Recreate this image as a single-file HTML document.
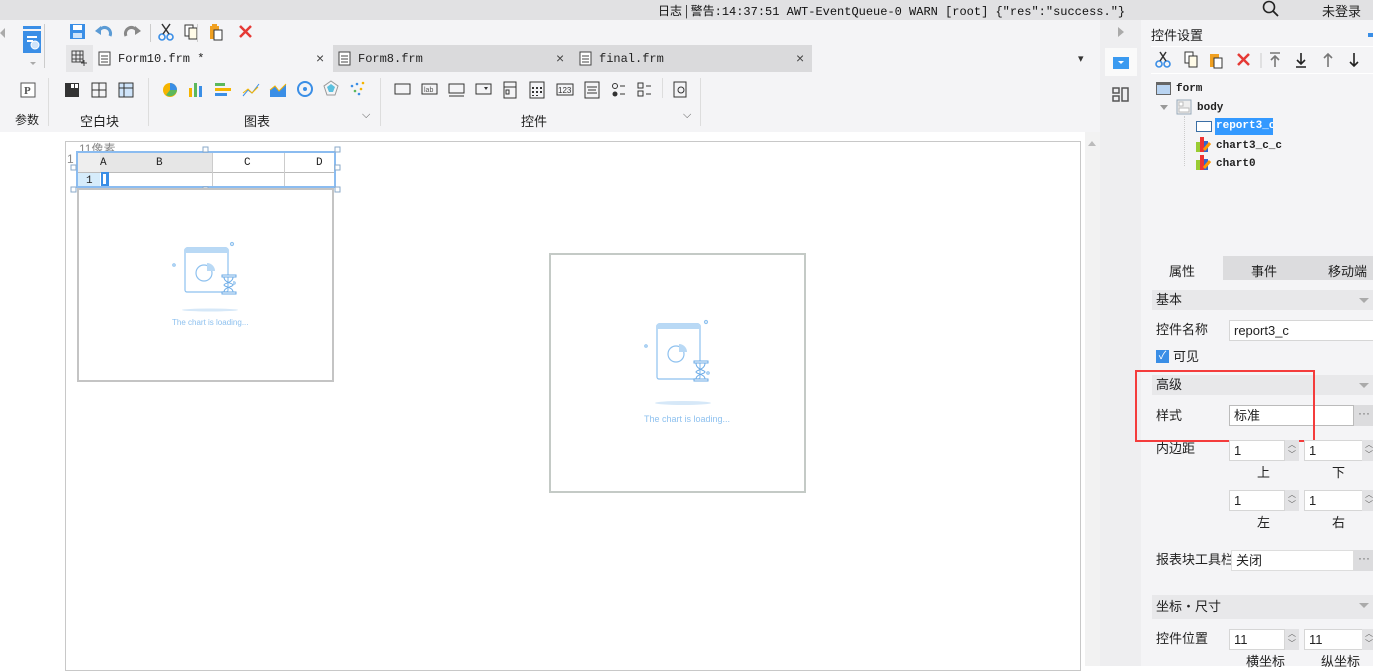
<!DOCTYPE html>
<html><head><meta charset="utf-8"><style>
*{margin:0;padding:0;box-sizing:border-box}
body{width:1373px;height:666px;overflow:hidden;position:relative;background:#fff;font-family:"Liberation Sans","Noto Sans CJK SC",sans-serif;font-size:12px;color:#222}
.a{position:absolute}
.mono{font-family:"Liberation Mono","Noto Sans CJK SC",monospace}
.sec{position:absolute;left:1152px;width:221px;height:20px;background:#e8e8ea;padding-left:4px;line-height:20px;font-size:13px}
.sec:after{content:"";position:absolute;right:4px;top:8px;border:5px solid transparent;border-top:5px solid #aaa}
.inp{position:absolute;background:#fff;border:1px solid #d6d6d6;height:21px;line-height:19px;padding-left:4px;font-size:13px}
.spin{position:absolute;width:14px;height:21px;background:#e2e2e4;font-size:8px;color:#666;text-align:center;line-height:10px}
.lbl{position:absolute;font-size:13px;line-height:16px}
.dots{position:absolute;width:20px;height:21px;background:#dcdcde;color:#666;text-align:center;line-height:16px;font-size:12px}
</style></head><body>
<div class="a" style="left:0;top:0;width:1373px;height:20px;background:#e1e1e3"></div>
<div class="a mono" style="left:658px;top:2px;font-size:12px;color:#111"><span style="font-family:'Noto Sans CJK SC'">日志 | 警告</span>:14:37:51 AWT-EventQueue-0 WARN [root] {"res":"success."}</div>
<svg class="a" style="left:1262px;top:0" width="18" height="18"><circle cx="7" cy="7" r="5.5" fill="none" stroke="#222" stroke-width="1.6"/><path d="M11 11l5 5" stroke="#222" stroke-width="1.8"/></svg>
<div class="a" style="left:1322px;top:1px;font-size:13px">未登录</div>
<div class="a" style="left:0;top:20px;width:1100px;height:112px;background:#f4f4f6"></div>
<div class="a" style="left:0;top:28px;border:5px solid transparent;border-right:5px solid #aaa;border-left:0"></div>
<svg class="a" style="left:22px;top:25px" width="22" height="32"><rect x="1" y="1" width="18" height="3" fill="#3a8ee6"/><rect x="1" y="6" width="18" height="22" fill="#3a8ee6"/><rect x="5" y="11" width="10" height="2" fill="#fff"/><rect x="5" y="15" width="6" height="2" fill="#fff"/><circle cx="13" cy="20" r="4" fill="#cfe4fa" stroke="#fff"/></svg>
<div class="a" style="left:30px;top:62px;border:3px solid transparent;border-top:3px solid #aaa"></div>
<div class="a" style="left:44px;top:24px;width:1px;height:44px;background:#ccc"></div>
<svg class="a" style="left:69px;top:23px" width="190" height="18">
<rect x="1" y="1" width="15" height="15" fill="#3a8ee6"/><rect x="4" y="2" width="9" height="5" fill="#fff"/><rect x="4" y="10" width="9" height="5" fill="#cfe4fa"/>
<path d="M30 8a6 6 0 0 1 11 5" stroke="#5b9bd5" stroke-width="3" fill="none"/><path d="M26 8l6-5v9z" fill="#5b9bd5"/>
<path d="M68 8a6 6 0 0 0 -11 5" stroke="#888" stroke-width="3" fill="none"/><path d="M72 8l-6-5v9z" fill="#888"/>
<circle cx="93" cy="14" r="3" fill="none" stroke="#3a8ee6" stroke-width="1.6"/><circle cx="101" cy="14" r="3" fill="none" stroke="#3a8ee6" stroke-width="1.6"/><path d="M94 11l7-10M100 11l-7-10" stroke="#333" stroke-width="1.5"/>
<rect x="116" y="2" width="8" height="11" fill="#fff" stroke="#333"/><rect x="120" y="5" width="8" height="11" fill="#fffbe8" stroke="#333"/>
<rect x="141" y="3" width="9" height="13" fill="#f0a020"/><rect x="145" y="7" width="8" height="10" fill="#fff" stroke="#333"/><rect x="143" y="1" width="5" height="3" fill="#f0a020"/>
<path d="M171 3l11 11M182 3l-11 11" stroke="#e53935" stroke-width="2.5"/></svg>
<div class="a" style="left:150px;top:24px;width:1px;height:18px;background:#ccc"></div>
<div class="a" style="left:197px;top:24px;width:1px;height:18px;background:#ccc"></div>
<div class="a" style="left:66px;top:45px;width:746px;height:27px;background:#dadadc"></div>
<div class="a" style="left:66px;top:45px;width:27px;height:27px;background:#e6e6e8"></div>
<svg class="a" style="left:71px;top:50px" width="16" height="16"><path d="M1 1h11v11H1zM1 5h11M1 9h11M5 1v11M9 1v11" stroke="#444" fill="none"/><path d="M13 10v6M10 13h6" stroke="#444"/></svg>
<div class="a" style="left:93px;top:45px;width:240px;height:27px;background:#f4f4f6"></div>
<svg class="a" style="left:98px;top:51px" width="14" height="15"><rect x="1" y="1" width="11" height="13" fill="#fff" stroke="#444"/><path d="M3 5h7M3 8h7M3 11h7" stroke="#444"/></svg>
<div class="a mono" style="left:118px;top:52px;font-size:12px">Form10.frm *</div>
<div class="a" style="left:316px;top:50px;font-size:14px;color:#444">×</div>
<svg class="a" style="left:338px;top:51px" width="14" height="15"><rect x="1" y="1" width="11" height="13" fill="#fff" stroke="#444"/><path d="M3 5h7M3 8h7M3 11h7" stroke="#444"/></svg>
<div class="a mono" style="left:358px;top:52px">Form8.frm</div>
<div class="a" style="left:556px;top:50px;font-size:14px;color:#444">×</div>
<svg class="a" style="left:579px;top:51px" width="14" height="15"><rect x="1" y="1" width="11" height="13" fill="#fff" stroke="#444"/><path d="M3 5h7M3 8h7M3 11h7" stroke="#444"/></svg>
<div class="a mono" style="left:599px;top:52px">final.frm</div>
<div class="a" style="left:796px;top:50px;font-size:14px;color:#444">×</div>
<div class="a" style="left:1078px;top:52px;font-size:11px;color:#333">▾</div>
<svg class="a" style="left:0;top:78px" width="700" height="26">
<rect x="21" y="5" width="14" height="14" fill="#fff" stroke="#555"/><text x="24" y="16" font-size="11" font-family="Liberation Serif" font-weight="bold" fill="#555">P</text>
<rect x="65" y="5" width="14" height="14" fill="#333"/><rect x="71" y="6" width="3" height="4" fill="#fff"/><rect x="75" y="6" width="3" height="4" fill="#fff"/>
<rect x="92" y="5" width="14" height="14" fill="none" stroke="#333"/><path d="M99 5v14M92 12h14" stroke="#333"/>
<rect x="119" y="5" width="14" height="14" fill="#cfe4fa" stroke="#333"/><path d="M124 5v14M119 10h14" stroke="#333"/>
<circle cx="170" cy="12" r="7" fill="#f5b400"/><path d="M170 12V5a7 7 0 0 1 7 7z" fill="#3a8ee6"/><path d="M170 12h7a7 7 0 0 1-11 5z" fill="#5cb85c"/>
<rect x="189" y="10" width="3" height="9" fill="#f5b400"/><rect x="194" y="5" width="3" height="14" fill="#5cb85c"/><rect x="199" y="8" width="3" height="11" fill="#3a8ee6"/>
<rect x="215" y="5" width="10" height="3" fill="#5cb85c"/><rect x="215" y="10" width="16" height="3" fill="#f5b400"/><rect x="215" y="15" width="12" height="3" fill="#3a8ee6"/>
<path d="M243 18l5-6 4 3 7-9" stroke="#3a8ee6" fill="none"/><path d="M243 15l5-4 4 4 6-6" stroke="#f5b400" fill="none"/>
<path d="M270 19V12l5-4 4 5 7-7v13z" fill="#3a8ee6"/><path d="M270 12l5-4 4 5 7-7" stroke="#f5b400" fill="none"/>
<circle cx="305" cy="11" r="7" fill="none" stroke="#3a8ee6" stroke-width="2"/><circle cx="305" cy="11" r="2" fill="#3a8ee6"/>
<path d="M331 3l7 5-3 9h-8l-3-9z" fill="none" stroke="#999"/><path d="M331 6l4 3-2 5h-4l-2-5z" fill="#5bc0de"/>
<g fill="#3a8ee6"><circle cx="352" cy="8" r="1.3"/><circle cx="357" cy="6" r="1.3"/><circle cx="361" cy="11" r="1.3" fill="#f5b400"/><circle cx="355" cy="13" r="1.3" fill="#5cb85c"/><circle cx="359" cy="16" r="1.3"/><circle cx="363" cy="5" r="1.3" fill="#f5b400"/></g>
<rect x="395" y="6" width="15" height="10" fill="none" stroke="#333"/>
<rect x="422" y="6" width="15" height="10" fill="none" stroke="#333"/><text x="424" y="14" font-size="7" fill="#555">lab</text>
<rect x="449" y="6" width="15" height="9" fill="none" stroke="#333"/><path d="M449 18h15" stroke="#333"/>
<rect x="476" y="6" width="15" height="10" fill="none" stroke="#333"/><path d="M484 9l2 3 2-3z" fill="#333"/>
<rect x="504" y="4" width="12" height="16" fill="none" stroke="#333"/><path d="M504 9h12" stroke="#333"/><rect x="506" y="12" width="3" height="4" fill="none" stroke="#333"/>
<rect x="530" y="4" width="14" height="16" fill="none" stroke="#333"/><g fill="#333"><rect x="532" y="9" width="2" height="2"/><rect x="536" y="9" width="2" height="2"/><rect x="540" y="9" width="2" height="2"/><rect x="532" y="13" width="2" height="2"/><rect x="536" y="13" width="2" height="2"/><rect x="540" y="13" width="2" height="2"/><rect x="532" y="17" width="2" height="1"/><rect x="536" y="17" width="2" height="1"/></g>
<rect x="557" y="6" width="16" height="11" fill="none" stroke="#333"/><text x="558" y="15" font-size="8" fill="#333">123</text>
<rect x="585" y="4" width="14" height="16" fill="none" stroke="#333"/><path d="M587 9h10M588 12h8M587 15h10" stroke="#333"/>
<circle cx="615" cy="8" r="2.5" fill="none" stroke="#333"/><circle cx="615" cy="16" r="2.5" fill="#333"/><path d="M620 8h5M620 16h5" stroke="#333"/>
<rect x="638" y="5" width="5" height="5" fill="none" stroke="#333"/><rect x="638" y="13" width="5" height="5" fill="none" stroke="#333"/><path d="M646 8h5M646 16h5" stroke="#333"/>
<rect x="674" y="4" width="12" height="15" fill="none" stroke="#333"/><circle cx="681" cy="12" r="3" fill="none" stroke="#333"/>
</svg>
<div class="a" style="left:48px;top:78px;width:1px;height:48px;background:#ddd"></div>
<div class="a" style="left:148px;top:78px;width:1px;height:48px;background:#ddd"></div>
<div class="a" style="left:380px;top:78px;width:1px;height:48px;background:#ddd"></div>
<div class="a" style="left:662px;top:78px;width:1px;height:20px;background:#ddd"></div>
<div class="a" style="left:700px;top:78px;width:1px;height:48px;background:#ddd"></div>
<div class="a" style="left:15px;top:111px;font-size:12px">参数</div>
<div class="a" style="left:80px;top:111px;font-size:13px">空白块</div>
<div class="a" style="left:244px;top:111px;font-size:13px">图表</div>
<div class="a" style="left:362px;top:109px;font-size:11px;color:#555">⌵</div>
<div class="a" style="left:521px;top:111px;font-size:13px">控件</div>
<div class="a" style="left:683px;top:109px;font-size:11px;color:#555">⌵</div>
<div class="a" style="left:65px;top:141px;width:1016px;height:530px;border:1px solid #c8c8c8"></div>
<div class="a" style="left:1085px;top:132px;width:15px;height:534px;background:#f2f2f2"></div>
<div class="a" style="left:1088px;top:137px;border:4px solid transparent;border-bottom:5px solid #bbb"></div>
<div class="a" style="left:79px;top:140px;font-size:12px;color:#888">11像素</div>
<div class="a" style="left:67px;top:150px;font-size:12px;color:#888">1 像素</div>
<div class="a" style="left:76px;top:151px;width:260px;height:37px;border:2px solid #8bbcf0;background:#fff"></div>
<div class="a" style="left:100px;top:153px;width:112px;height:19px;background:#e6e6e6"></div>
<div class="a" style="left:78px;top:153px;width:22px;height:19px;background:#eee"></div>
<div class="a" style="left:78px;top:172px;width:22px;height:14px;background:#d6ecfb"></div>
<div class="a" style="left:78px;top:172px;width:256px;height:1px;background:#bbb"></div>
<div class="a" style="left:212px;top:153px;width:1px;height:33px;background:#ccc"></div>
<div class="a" style="left:284px;top:153px;width:1px;height:33px;background:#ccc"></div>
<div class="a" style="left:101px;top:172px;width:8px;height:14px;border:2px solid #3a8ee6;border-right:3px solid #3a8ee6"></div>
<div class="a mono" style="left:100px;top:157px;font-size:11px">A</div>
<div class="a mono" style="left:156px;top:157px;font-size:11px">B</div>
<div class="a mono" style="left:244px;top:157px;font-size:11px">C</div>
<div class="a mono" style="left:316px;top:157px;font-size:11px">D</div>
<div class="a mono" style="left:86px;top:175px;font-size:11px">1</div>
<svg class="a" style="left:70px;top:145px" width="272" height="50" fill="#fff" stroke="#8aa8c8">
<rect x="133" y="2" width="5" height="5"/><rect x="265" y="2" width="5" height="5"/><rect x="1" y="20" width="5" height="5"/><rect x="265" y="20" width="5" height="5"/><rect x="1" y="42" width="5" height="5"/><rect x="133" y="42" width="5" height="5"/><rect x="265" y="42" width="5" height="5"/></svg>
<div class="a" style="left:77px;top:188px;width:257px;height:194px;border:2px solid #c4c4c4;background:#fff"></div>
<div class="a" style="left:549px;top:253px;width:257px;height:240px;border:2px solid #c4cac6;background:#fff"></div>
<svg class="a" style="left:170px;top:240px" width="80" height="75"><g fill="none" stroke="#8ec1ef" stroke-width="1.2"><rect x="15" y="8" width="43" height="44" rx="2"/><circle cx="62" cy="4" r="1.5"/><circle cx="4" cy="25" r="1.2"/><circle cx="64" cy="43" r="1.2"/><circle cx="34" cy="33" r="8"/></g><rect x="15" y="8" width="43" height="5" fill="#b9d9f5"/><path d="M37 23a8 8 0 0 1 8 8h-8z" fill="#b9d9f5"/><g fill="#fff" stroke="#6aaae6"><rect x="52" y="35" width="14" height="2"/><rect x="52" y="52" width="14" height="2"/><path d="M54 37c0 6 9 6 9 8s-9 2-9 7M63 37c0 6-9 6-9 8s9 2 9 7"/></g><ellipse cx="40" cy="70" rx="28" ry="1.5" fill="#d6e8f8"/></svg>
<div class="a" style="left:172px;top:318px;font-size:8px;color:#8ec1ef">The chart is loading...</div>
<svg class="a" style="left:642px;top:316px" width="80" height="75"><g fill="none" stroke="#8ec1ef" stroke-width="1.2"><rect x="15" y="8" width="43" height="55" rx="2"/><circle cx="64" cy="6" r="1.5"/><circle cx="4" cy="30" r="1.2"/><circle cx="66" cy="57" r="1.2"/><circle cx="34" cy="38" r="8"/></g><rect x="15" y="8" width="43" height="5" fill="#b9d9f5"/><path d="M37 28a8 8 0 0 1 8 8h-8z" fill="#b9d9f5"/><g fill="#fff" stroke="#6aaae6"><rect x="52" y="45" width="14" height="2"/><rect x="52" y="63" width="14" height="2"/><path d="M54 47c0 7 9 7 9 9s-9 2-9 7M63 47c0 7-9 7-9 9s9 2 9 7"/></g></svg>
<div class="a" style="left:655px;top:401px;width:56px;height:4px;border-radius:50%;background:#d6e8f8"></div>
<div class="a" style="left:644px;top:414px;font-size:9px;color:#8ec1ef">The chart is loading...</div>
<div class="a" style="left:1100px;top:20px;width:41px;height:646px;background:#eeeef0"></div>
<div class="a" style="left:1118px;top:27px;border:5px solid transparent;border-left:6px solid #aaa;border-right:0"></div>
<div class="a" style="left:1105px;top:48px;width:32px;height:28px;background:#fafafa"></div>
<div class="a" style="left:1113px;top:57px;width:16px;height:12px;background:#3a9af0"></div>
<div class="a" style="left:1118px;top:61px;border:3px solid transparent;border-top:3px solid #fff"></div>
<svg class="a" style="left:1112px;top:87px" width="18" height="16" fill="none" stroke="#555" stroke-width="1.5"><rect x="1" y="1" width="6" height="5"/><rect x="1" y="9" width="6" height="5"/><rect x="10" y="1" width="6" height="13"/></svg>
<div class="a" style="left:1141px;top:20px;width:232px;height:646px;background:#f4f4f6"></div>
<div class="a" style="left:1151px;top:25px;font-size:13px">控件设置</div>
<div class="a" style="left:1368px;top:33px;width:5px;height:4px;background:#3a8ee6"></div>
<div class="a" style="left:1151px;top:46px;width:222px;height:1px;background:#fff"></div>
<svg class="a" style="left:1155px;top:50px" width="218" height="20">
<circle cx="4" cy="14" r="3" fill="none" stroke="#3a8ee6" stroke-width="1.6"/><circle cx="12" cy="14" r="3" fill="none" stroke="#3a8ee6" stroke-width="1.6"/><path d="M5 11l6-9M11 11l-6-9" stroke="#333" stroke-width="1.5"/>
<rect x="30" y="2" width="8" height="11" fill="#fff" stroke="#333"/><rect x="34" y="6" width="8" height="11" fill="#fffbe8" stroke="#333"/>
<rect x="55" y="4" width="9" height="13" fill="#f0a020"/><rect x="59" y="8" width="8" height="10" fill="#fff" stroke="#333"/>
<path d="M83 4l11 11M94 4l-11 11" stroke="#e53935" stroke-width="2.5"/>
<path d="M106 3v15" stroke="#ccc"/>
<path d="M115 3h10M120 17V6M116 10l4-4 4 4" stroke="#777" stroke-width="1.6" fill="none"/>
<path d="M141 17h10M146 3v11M142 10l4 4 4-4" stroke="#222" stroke-width="1.6" fill="none"/>
<path d="M173 17V4M169 8l4-4 4 4" stroke="#777" stroke-width="1.6" fill="none"/>
<path d="M199 3v13M195 12l4 4 4-4" stroke="#222" stroke-width="1.6" fill="none"/></svg>
<div class="a" style="left:1151px;top:73px;width:222px;height:1px;background:#fff"></div>
<div class="a" style="left:1156px;top:82px;width:15px;height:13px;border:1px solid #666;background:#b9d4f2;border-top-width:3px"></div>
<div class="a mono" style="left:1176px;top:83px;font-size:11px;font-weight:bold">form</div>
<div class="a" style="left:1160px;top:105px;border:4px solid transparent;border-top:5px solid #999"></div>
<svg class="a" style="left:1176px;top:99px" width="17" height="17"><rect x="1" y="1" width="14" height="14" fill="#eee" stroke="#9ab"/><rect x="3" y="3" width="4" height="4" fill="#fff" stroke="#bbb"/><rect x="3" y="9" width="10" height="4" fill="#fff" stroke="#bbb"/></svg>
<div class="a mono" style="left:1197px;top:102px;font-size:11px;font-weight:bold">body</div>
<div class="a" style="left:1184px;top:116px;width:1px;height:50px;border-left:1px dotted #ccc"></div>
<div class="a" style="left:1196px;top:121px;width:16px;height:11px;border:1px solid #3a6ea5;background:#fff"></div>
<div class="a mono" style="left:1215px;top:118px;width:58px;height:17px;background:#3399ff;color:#fff;font-size:11px;font-weight:bold;line-height:17px;padding-left:1px;overflow:hidden;white-space:nowrap">report3_c</div>
<svg class="a" style="left:1196px;top:137px" width="16" height="36"><g><rect x="0" y="5" width="4" height="10" fill="#9c3"/><rect x="4" y="0" width="4" height="15" fill="#e33"/><rect x="8" y="4" width="4" height="11" fill="#36c"/><path d="M8 13l6-7" stroke="#f90" stroke-width="3"/></g><g transform="translate(0,18)"><rect x="0" y="5" width="4" height="10" fill="#9c3"/><rect x="4" y="0" width="4" height="15" fill="#e33"/><rect x="8" y="4" width="4" height="11" fill="#36c"/><path d="M8 13l6-7" stroke="#f90" stroke-width="3"/></g></svg>
<div class="a mono" style="left:1216px;top:140px;font-size:11px;font-weight:bold">chart3_c_c</div>
<div class="a mono" style="left:1216px;top:158px;font-size:11px;font-weight:bold">chart0</div>
<div class="a" style="left:1141px;top:256px;width:232px;height:24px;background:#dcdcde"></div>
<div class="a" style="left:1141px;top:256px;width:82px;height:24px;background:#f4f4f6"></div>
<div class="a" style="left:1169px;top:261px;font-size:13px">属性</div>
<div class="a" style="left:1251px;top:261px;font-size:13px">事件</div>
<div class="a" style="left:1328px;top:261px;font-size:13px">移动端</div>
<div class="sec" style="top:290px">基本</div>
<div class="lbl" style="left:1156px;top:322px">控件名称</div>
<div class="inp" style="left:1229px;top:320px;width:150px">report3_c</div>
<div class="a" style="left:1156px;top:350px;width:13px;height:13px;background:#3a8ee6;color:#fff;font-size:11px;line-height:13px;text-align:center">✓</div>
<div class="lbl" style="left:1173px;top:349px">可见</div>
<div class="sec" style="top:375px">高级</div>
<div class="lbl" style="left:1156px;top:408px">样式</div>
<div class="inp" style="left:1229px;top:405px;width:125px;border-color:#bbb">标准</div>
<div class="dots" style="left:1354px;top:405px">···</div>
<div class="a" style="left:1135px;top:370px;width:180px;height:72px;border:2px solid #f43c3c"></div>
<div class="lbl" style="left:1156px;top:441px">内边距</div>
<div class="inp" style="left:1229px;top:440px;width:56px">1</div><div class="spin" style="left:1285px;top:440px">︿<br>﹀</div>
<div class="inp" style="left:1304px;top:440px;width:60px">1</div><div class="spin" style="left:1362px;top:440px">︿<br>﹀</div>
<div class="lbl" style="left:1257px;top:465px">上</div><div class="lbl" style="left:1332px;top:465px">下</div>
<div class="inp" style="left:1229px;top:490px;width:56px">1</div><div class="spin" style="left:1285px;top:490px">︿<br>﹀</div>
<div class="inp" style="left:1304px;top:490px;width:60px">1</div><div class="spin" style="left:1362px;top:490px">︿<br>﹀</div>
<div class="lbl" style="left:1257px;top:515px">左</div><div class="lbl" style="left:1332px;top:515px">右</div>
<div class="lbl" style="left:1156px;top:552px">报表块工具栏</div>
<div class="inp" style="left:1231px;top:550px;width:123px;border-color:#ddd">关闭</div>
<div class="dots" style="left:1354px;top:550px">···</div>
<div class="sec" style="top:595px;height:24px;line-height:24px">坐标・尺寸</div>
<div class="lbl" style="left:1156px;top:631px">控件位置</div>
<div class="inp" style="left:1229px;top:629px;width:56px">11</div><div class="spin" style="left:1285px;top:629px">︿<br>﹀</div>
<div class="inp" style="left:1304px;top:629px;width:60px">11</div><div class="spin" style="left:1362px;top:629px">︿<br>﹀</div>
<div class="lbl" style="left:1246px;top:654px">横坐标</div><div class="lbl" style="left:1321px;top:654px">纵坐标</div>
</body></html>
